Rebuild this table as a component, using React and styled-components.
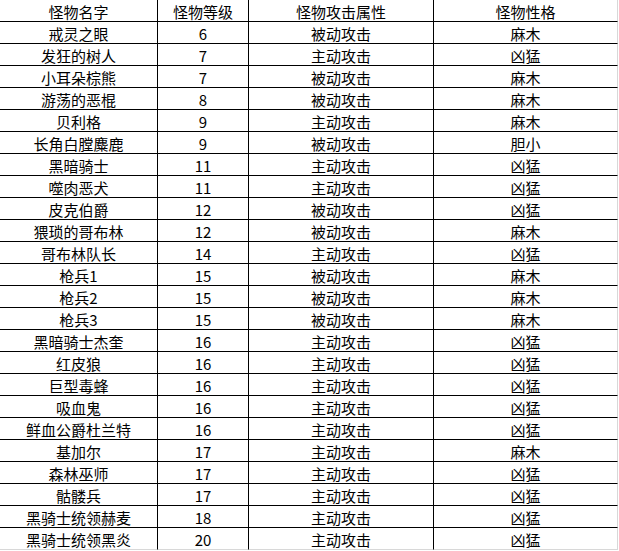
import React from 'react'
import styled, { createGlobalStyle } from 'styled-components'

const GlobalStyle = createGlobalStyle`
  html, body {
    margin: 0;
    padding: 0;
    background: #fff;
  }
  body {
    font-family: "Noto Sans CJK SC", "Liberation Sans", sans-serif;
    color: #000;
  }
`

const Grid = styled.div`
  display: grid;
  grid-template-columns: 158px 91px 185px 185px;
  grid-auto-rows: 22px;
  width: 619px;
`

const Cell = styled.div`
  display: flex;
  align-items: center;
  justify-content: center;
  font-size: 15px;
  line-height: 1;
  white-space: nowrap;
  padding-top: 1px;
  box-sizing: border-box;
  border-right: 1px solid ${(p) => (p.$last ? '#d8d8d8' : '#000')};
  border-bottom: 1px solid ${(p) => (p.$bottom ? '#d8d8d8' : '#000')};
  margin-right: ${(p) => (p.$last ? '1px' : '0')};
`

const headers = ['怪物名字', '怪物等级', '怪物攻击属性', '怪物性格']

const rows = [
  ['戒灵之眼', '6', '被动攻击', '麻木'],
  ['发狂的树人', '7', '主动攻击', '凶猛'],
  ['小耳朵棕熊', '7', '被动攻击', '麻木'],
  ['游荡的恶棍', '8', '被动攻击', '麻木'],
  ['贝利格', '9', '主动攻击', '麻木'],
  ['长角白膛麋鹿', '9', '被动攻击', '胆小'],
  ['黑暗骑士', '11', '主动攻击', '凶猛'],
  ['噬肉恶犬', '11', '主动攻击', '凶猛'],
  ['皮克伯爵', '12', '被动攻击', '凶猛'],
  ['猥琐的哥布林', '12', '被动攻击', '麻木'],
  ['哥布林队长', '14', '主动攻击', '凶猛'],
  ['枪兵1', '15', '被动攻击', '麻木'],
  ['枪兵2', '15', '被动攻击', '麻木'],
  ['枪兵3', '15', '被动攻击', '麻木'],
  ['黑暗骑士杰奎', '16', '主动攻击', '凶猛'],
  ['红皮狼', '16', '主动攻击', '凶猛'],
  ['巨型毒蜂', '16', '主动攻击', '凶猛'],
  ['吸血鬼', '16', '主动攻击', '凶猛'],
  ['鲜血公爵杜兰特', '16', '主动攻击', '凶猛'],
  ['基加尔', '17', '主动攻击', '麻木'],
  ['森林巫师', '17', '主动攻击', '凶猛'],
  ['骷髅兵', '17', '主动攻击', '凶猛'],
  ['黑骑士统领赫麦', '18', '主动攻击', '凶猛'],
  ['黑骑士统领黑炎', '20', '主动攻击', '凶猛'],
]

const App = () => {
  const all = [headers, ...rows]
  return (
    <>
      <GlobalStyle />
      <Grid>
        {all.map((row, r) =>
          row.map((text, c) => (
            <Cell
              key={r + '-' + c}
              $last={c === 3}
              $bottom={r === all.length - 1}
            >
              {text}
            </Cell>
          ))
        )}
      </Grid>
    </>
  )
}

export default App
